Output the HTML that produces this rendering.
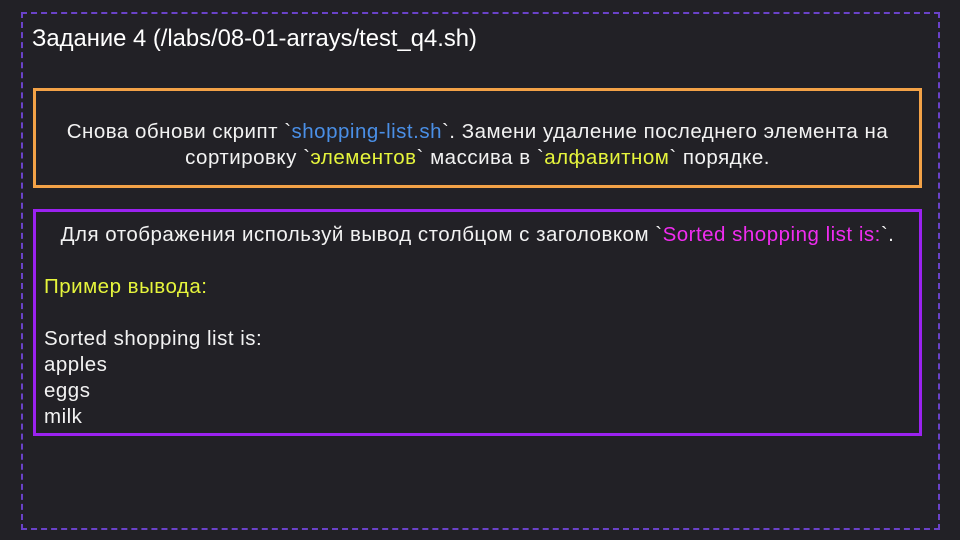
<!DOCTYPE html>
<html><head><meta charset="utf-8"><style>
html,body{margin:0;padding:0;}
body{width:960px;height:540px;background:#222126;position:relative;overflow:hidden;font-family:"Liberation Sans","DejaVu Sans",sans-serif;color:#f2f2f2;}
.dash{position:absolute;left:21px;top:12px;width:915px;height:514px;border:2px dashed #6a42c8;}
.title{position:absolute;left:32px;top:25px;font-size:23.8px;color:#fff;}
.b1{position:absolute;left:33px;top:88px;width:883px;height:94px;border:3px solid #f3a247;box-sizing:content-box;}
.b1 p{margin:0;position:absolute;left:0;right:0;top:28px;text-align:center;font-size:20.5px;letter-spacing:0.5px;line-height:26px;}
.b2{position:absolute;left:33px;top:209px;width:883px;height:221px;border:3px solid #9b22f0;}
.t{position:absolute;font-size:20.5px;letter-spacing:0.5px;line-height:26px;}
.blue{color:#4a8fe6}.yel{color:#e6f53c}.mag{color:#f02cf0}
</style></head><body>
<div class="dash"></div>
<div class="title">Задание 4 (/labs/08-01-arrays/test_q4.sh)</div>
<div class="b1"><p>Снова обнови скрипт `<span class="blue">shopping-list.sh</span>`. Замени удаление последнего элемента на<br>сортировку `<span class="yel">элементов</span>` массива в `<span class="yel">алфавитном</span>` порядке.</p></div>
<div class="b2">
<div class="t" style="left:0;right:0;top:10px;text-align:center">Для отображения используй вывод столбцом с заголовком `<span class="mag">Sorted shopping list is:</span>`.</div>
<div class="t yel" style="left:8px;top:62px">Пример вывода:</div>
<div class="t" style="left:8px;top:114px">Sorted shopping list is:<br>apples<br>eggs<br>milk</div>
</div>
</body></html>
